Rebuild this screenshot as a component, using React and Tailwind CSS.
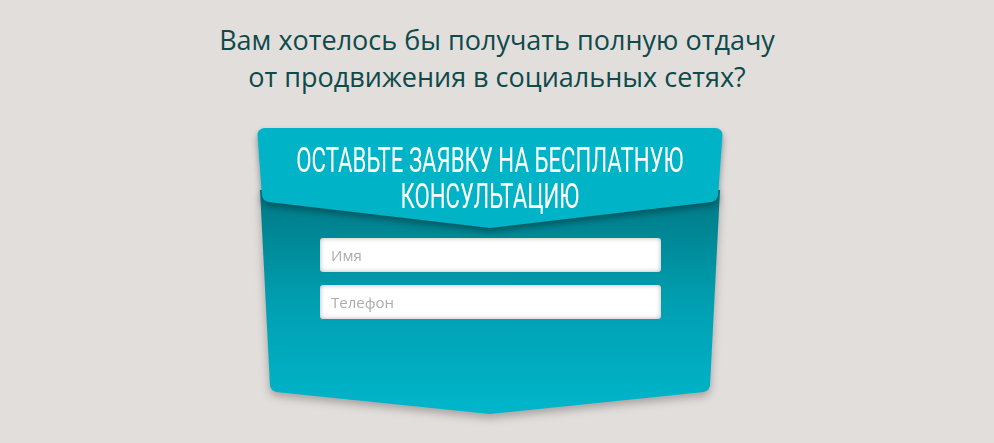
import React, { useState } from 'react';

const App = () => {
  const [form, setForm] = useState({ name: '', phone: '' });

  const handleChange = (e) => {
    setForm({ ...form, [e.target.name]: e.target.value });
  };

  return (
    <div className="h-[443px] overflow-hidden bg-[#e2dedc] flex flex-col items-center pt-[21px]">
      <h1 className="text-[27px] leading-[37px] text-center text-[#0f4a4b] font-['Open_Sans',sans-serif] font-normal">
        Вам хотелось бы получать полную отдачу
        <br />
        от продвижения в социальных сетях?
      </h1>

      <div className="mt-[33px] mr-[14px] w-[466px] flex flex-col items-center">
        {/* header ribbon */}
        <div className="relative z-10 w-full [filter:drop-shadow(0_4px_3px_rgba(0,40,45,0.45))]">
          <div className="h-[100px] rounded-t-[8px] bg-[#00b3c6] [clip-path:polygon(0_0,100%_0,461px_68px,459px_72px,455px_74px,233px_100px,11px_74px,7px_72px,5px_68px)] flex flex-col items-center pt-[15px]">
            <div className="text-white uppercase text-[35px] leading-[36px] font-['Roboto',sans-serif] font-normal text-center [transform:scaleX(0.635)] whitespace-nowrap">
              <div>Оставьте заявку на бесплатную</div>
              <div>консультацию</div>
            </div>
          </div>
        </div>

        {/* body */}
        <div className="relative z-0 -mt-[38px] w-[460px] [filter:drop-shadow(0_4px_4px_rgba(0,0,0,0.28))]">
          <div className="h-[224px] bg-gradient-to-b from-[#007884] via-[#009fb1] to-[#00b6cb] [clip-path:polygon(0_0,100%_0,450px_196px,448px_200px,444px_202px,230px_224px,16px_202px,12px_200px,10px_196px)] flex flex-col items-center pt-[48px] gap-[13px] pl-[1px]">
            <input
              type="text"
              name="name"
              value={form.name}
              onChange={handleChange}
              placeholder="Имя"
              className="w-[341px] h-[34px] rounded-[3px] bg-white px-[11px] text-[15px] font-['Open_Sans',sans-serif] text-gray-700 placeholder:text-[#acacac] outline-none shadow-[inset_0_0_5px_rgba(0,0,0,0.3)]"
            />
            <input
              type="text"
              name="phone"
              value={form.phone}
              onChange={handleChange}
              placeholder="Телефон"
              className="w-[341px] h-[34px] rounded-[3px] bg-white px-[11px] text-[15px] font-['Open_Sans',sans-serif] text-gray-700 placeholder:text-[#acacac] outline-none shadow-[inset_0_0_5px_rgba(0,0,0,0.3)]"
            />
          </div>
        </div>
      </div>
    </div>
  );
};

export default App;
